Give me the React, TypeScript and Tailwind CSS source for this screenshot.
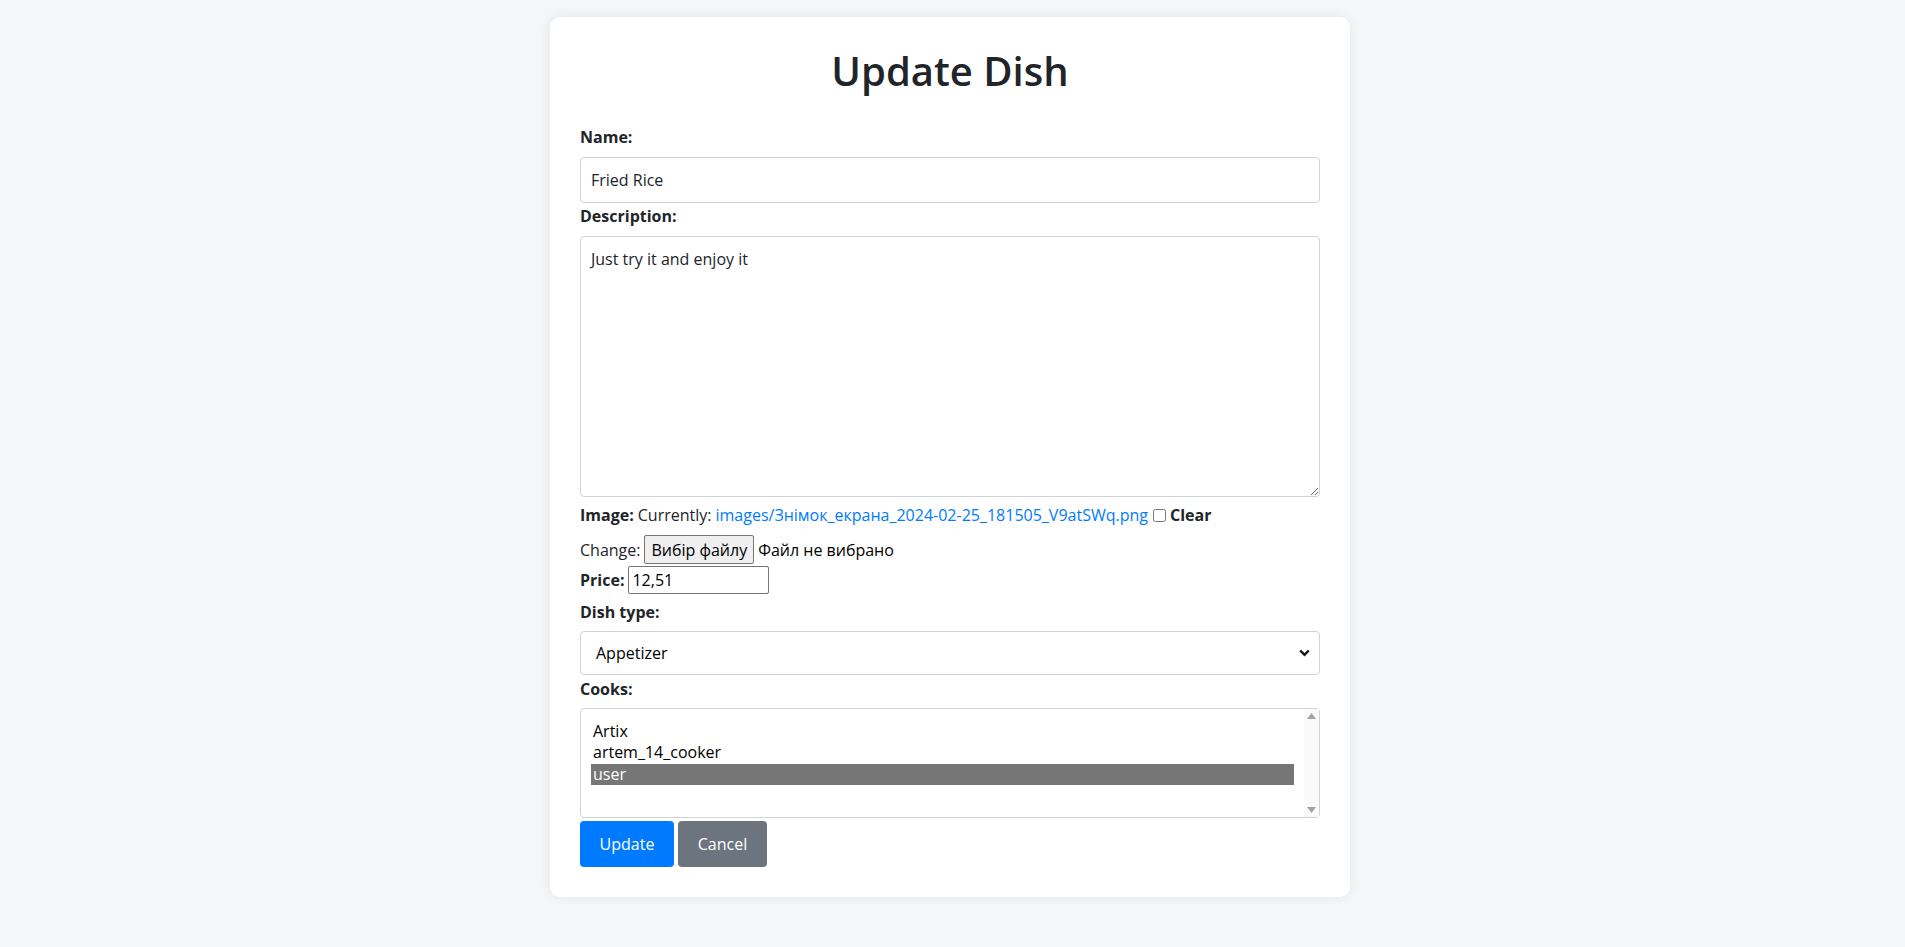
import React from 'react';

const font = { fontFamily: '"Open Sans", "Noto Sans", sans-serif' };

function Label({ children, className = '' }: { children: React.ReactNode; className?: string }) {
  return <div className={'h-[24px] leading-[24px] font-bold text-[16px] ' + className}>{children}</div>;
}

export default function App() {
  const cooks = ['Artix', 'artem_14_cooker', 'user'];

  return (
    <div className="min-h-screen bg-[#f5f6f8] flex justify-center pt-[17px] pb-[50px] pr-[5px] text-[#212529]" style={font}>
      <div className="w-[800px] bg-white rounded-[10px] shadow-[0_0_12px_rgba(0,0,0,0.07)] p-[30px]">
        <h1 className="text-[40px] leading-[48px] font-semibold text-center mb-[30px]">Update Dish</h1>

        <form className="text-[16px]" onSubmit={(e) => e.preventDefault()}>
          <Label className="mb-[8px]">Name:</Label>
          <input
            defaultValue="Fried Rice"
            className="block w-full h-[46px] px-[10px] border border-[#ced4da] rounded-[4px] text-[16px] outline-none"
          />

          <Label className="mt-[1px] mb-[8px]">Description:</Label>
          <textarea
            defaultValue="Just try it and enjoy it"
            className="block w-full h-[261px] px-[10px] py-[10px] border border-[#ced4da] rounded-[4px] text-[16px] leading-[24px] outline-none"
          />

          <div className="mt-[6px] h-[24px] flex items-center gap-[4px] whitespace-nowrap">
            <span className="font-bold">Image:</span>
            <span>Currently:</span>
            <a href="#" className="text-[#007bff]">images/Знімок_екрана_2024-02-25_181505_V9atSWq.png</a>
            <input type="checkbox" className="w-[13px] h-[13px] m-0 ml-[1px]" />
            <span className="font-bold">Clear</span>
          </div>

          <div className="mt-[8px] h-[29px] flex items-center gap-[4px] whitespace-nowrap">
            <span>Change:</span>
            <button
              type="button"
              className="h-[29px] px-[6px] bg-[#efefef] border border-[#767676] rounded-[2px] text-[16px] text-black"
            >
              Вибір файлу
            </button>
            <span className="text-black">Файл не вибрано</span>
          </div>

          <div className="mt-[2px] h-[28px] flex items-center gap-[4px]">
            <span className="font-bold">Price:</span>
            <input
              defaultValue="12,51"
              className="w-[141px] h-[28px] px-[3px] border border-[#767676] rounded-[2px] text-[16px] text-black outline-none"
            />
          </div>

          <Label className="mt-[6px] mb-[7px]">Dish type:</Label>
          <div className="h-[44px] border border-[#ced4da] rounded-[4px] flex items-center justify-between pl-[15px] pr-[9px] text-black">
            <span>Appetizer</span>
            <svg width="11" height="8" viewBox="0 0 11 8">
              <path d="M1.2 1.5 L5.5 5.8 L9.8 1.5" fill="none" stroke="#111" strokeWidth="2.4" />
            </svg>
          </div>

          <Label className="mt-[2px] mb-[7px]">Cooks:</Label>
          <div className="h-[110px] border border-[#ced4da] rounded-[4px] flex text-black">
            <div className="flex-1 pl-[10px] pr-[10px] pt-[12px]">
              {cooks.map((c) => (
                <div
                  key={c}
                  className={
                    'h-[21.3px] leading-[21.3px] px-[2px] ' + (c === 'user' ? 'bg-[#767676] text-white' : '')
                  }
                >
                  {c}
                </div>
              ))}
            </div>
            <div className="w-[15px] bg-[#fafafa] flex flex-col justify-between items-center py-[4px]">
              <svg width="9" height="6" viewBox="0 0 9 6">
                <path d="M4.5 0 L9 6 L0 6 Z" fill="#a3a3a3" />
              </svg>
              <svg width="9" height="6" viewBox="0 0 9 6">
                <path d="M0 0 L9 0 L4.5 6 Z" fill="#a3a3a3" />
              </svg>
            </div>
          </div>

          <div className="mt-[3px] flex gap-[4px]">
            <button type="submit" className="h-[46px] w-[94px] bg-[#007bff] text-white rounded-[4px] text-[16px]">
              Update
            </button>
            <button type="button" className="h-[46px] w-[89px] bg-[#6c757d] text-white rounded-[4px] text-[16px]">
              Cancel
            </button>
          </div>
        </form>
      </div>
    </div>
  );
}
